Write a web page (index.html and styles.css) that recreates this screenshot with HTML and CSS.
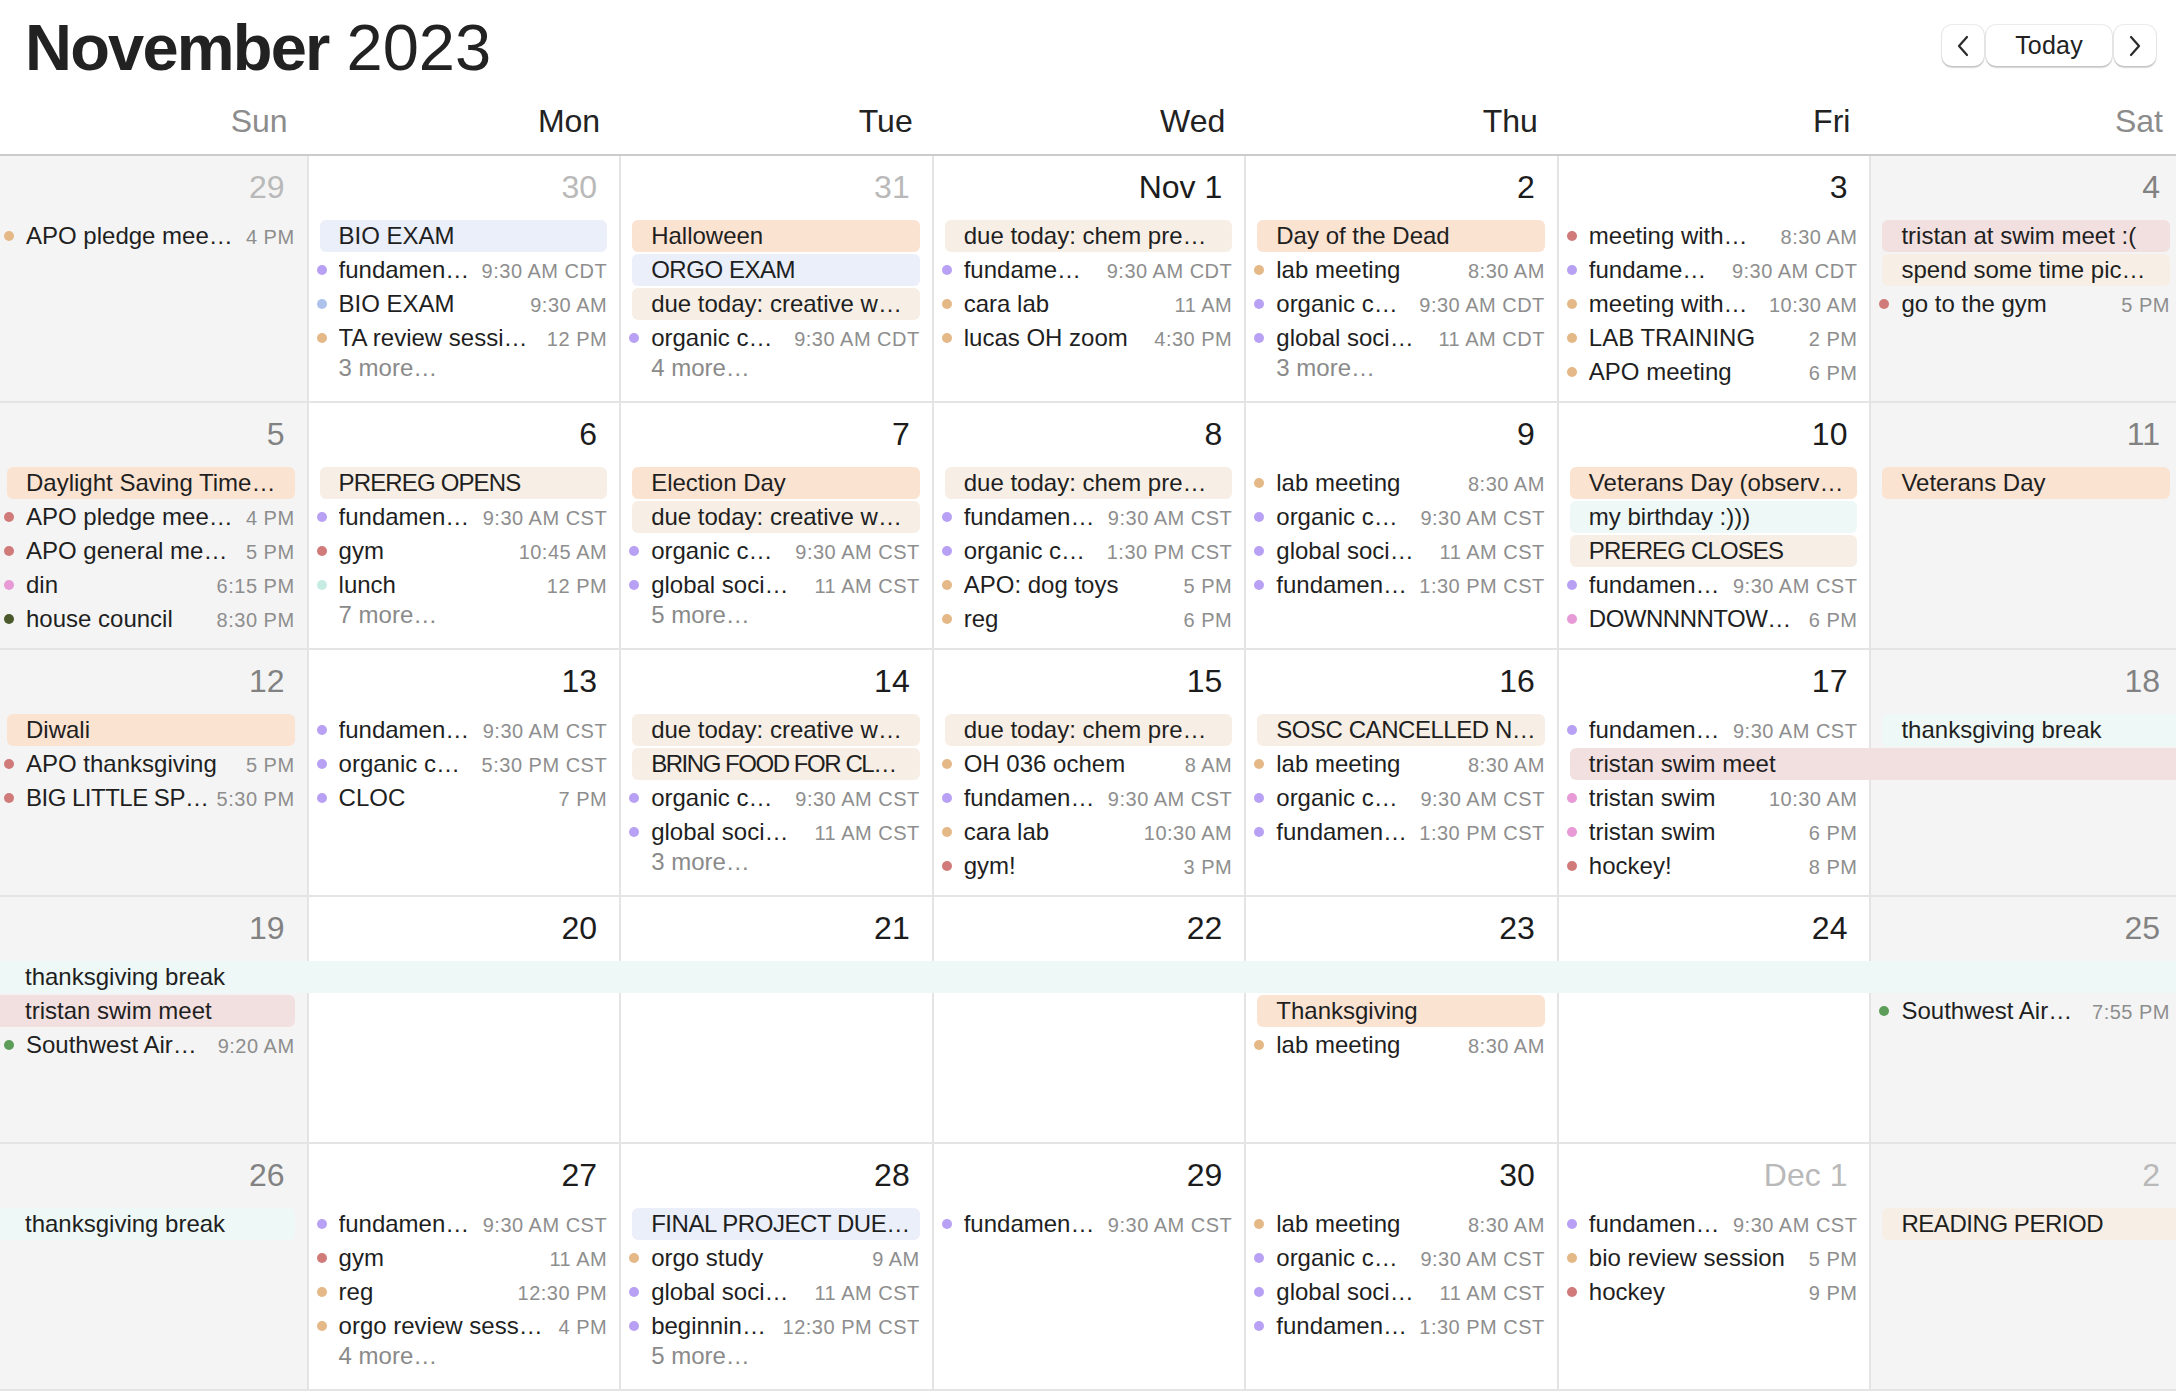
FILE: index.html
```html
<!DOCTYPE html>
<html>
<head>
<meta charset="utf-8">
<link rel="stylesheet" href="styles.css">
</head>
<body>
<div class="app">
  <header class="header">
    <div class="topbar">
      <h1 class="title"><b>November</b> 2023</h1>
      <div class="nav">
        <button class="btn icon"><svg width="16" height="24" viewBox="0 0 16 24"><path d="M12 3 L4 12 L12 21" fill="none" stroke="#2a2a2a" stroke-width="2.2" stroke-linecap="round" stroke-linejoin="round"/></svg></button>
        <button class="btn today">Today</button>
        <button class="btn icon"><svg width="16" height="24" viewBox="0 0 16 24"><path d="M4 3 L12 12 L4 21" fill="none" stroke="#2a2a2a" stroke-width="2.2" stroke-linecap="round" stroke-linejoin="round"/></svg></button>
      </div>
    </div>
    <div class="daynames">
      <div class="dn we">Sun</div><div class="dn">Mon</div><div class="dn">Tue</div><div class="dn">Wed</div><div class="dn">Thu</div><div class="dn">Fri</div><div class="dn we">Sat</div>
    </div>
  </header>

  <!-- Week 1 -->
  <section class="week">
    <div class="bg d1 we"></div><div class="bg d2"></div><div class="bg d3"></div><div class="bg d4"></div><div class="bg d5"></div><div class="bg d6"></div><div class="bg d7 we"></div>
    <div class="num d1 other">29</div><div class="num d2 other">30</div><div class="num d3 other">31</div><div class="num d4">Nov 1</div><div class="num d5">2</div><div class="num d6">3</div><div class="num d7 wen">4</div>

    <div class="ev timed d1 s1"><i class="dot tan"></i><span class="t">APO pledge mee…</span><span class="tm">4 PM</span></div>

    <div class="ev allday blue d2 s1">BIO EXAM</div>
    <div class="ev timed d2 s2"><i class="dot purple"></i><span class="t">fundamen…</span><span class="tm">9:30 AM CDT</span></div>
    <div class="ev timed d2 s3"><i class="dot lblue"></i><span class="t">BIO EXAM</span><span class="tm">9:30 AM</span></div>
    <div class="ev timed d2 s4"><i class="dot tan"></i><span class="t">TA review sessi…</span><span class="tm">12 PM</span></div>
    <div class="more d2 s5">3 more…</div>

    <div class="ev allday peach d3 s1">Halloween</div>
    <div class="ev allday blue d3 s2 caps">ORGO EXAM</div>
    <div class="ev allday beige d3 s3">due today: creative w…</div>
    <div class="ev timed d3 s4"><i class="dot purple"></i><span class="t">organic c…</span><span class="tm">9:30 AM CDT</span></div>
    <div class="more d3 s5">4 more…</div>

    <div class="ev allday beige d4 s1">due today: chem pre…</div>
    <div class="ev timed d4 s2"><i class="dot purple"></i><span class="t">fundame…</span><span class="tm">9:30 AM CDT</span></div>
    <div class="ev timed d4 s3"><i class="dot tan"></i><span class="t">cara lab</span><span class="tm">11 AM</span></div>
    <div class="ev timed d4 s4"><i class="dot tan"></i><span class="t">lucas OH zoom</span><span class="tm">4:30 PM</span></div>

    <div class="ev allday peach d5 s1">Day of the Dead</div>
    <div class="ev timed d5 s2"><i class="dot tan"></i><span class="t">lab meeting</span><span class="tm">8:30 AM</span></div>
    <div class="ev timed d5 s3"><i class="dot purple"></i><span class="t">organic c…</span><span class="tm">9:30 AM CDT</span></div>
    <div class="ev timed d5 s4"><i class="dot purple"></i><span class="t">global soci…</span><span class="tm">11 AM CDT</span></div>
    <div class="more d5 s5">3 more…</div>

    <div class="ev timed d6 s1"><i class="dot red"></i><span class="t">meeting with…</span><span class="tm">8:30 AM</span></div>
    <div class="ev timed d6 s2"><i class="dot purple"></i><span class="t">fundame…</span><span class="tm">9:30 AM CDT</span></div>
    <div class="ev timed d6 s3"><i class="dot tan"></i><span class="t">meeting with…</span><span class="tm">10:30 AM</span></div>
    <div class="ev timed d6 s4"><i class="dot tan"></i><span class="t">LAB TRAINING</span><span class="tm">2 PM</span></div>
    <div class="ev timed d6 s5"><i class="dot tan"></i><span class="t">APO meeting</span><span class="tm">6 PM</span></div>

    <div class="ev allday pink d7 s1">tristan at swim meet :(</div>
    <div class="ev allday beige d7 s2">spend some time pic…</div>
    <div class="ev timed d7 s3"><i class="dot red"></i><span class="t">go to the gym</span><span class="tm">5 PM</span></div>
  </section>

  <!-- Week 2 -->
  <section class="week">
    <div class="bg d1 we"></div><div class="bg d2"></div><div class="bg d3"></div><div class="bg d4"></div><div class="bg d5"></div><div class="bg d6"></div><div class="bg d7 we"></div>
    <div class="num d1 wen">5</div><div class="num d2">6</div><div class="num d3">7</div><div class="num d4">8</div><div class="num d5">9</div><div class="num d6">10</div><div class="num d7 wen">11</div>

    <div class="ev allday peach d1 s1">Daylight Saving Time…</div>
    <div class="ev timed d1 s2"><i class="dot red"></i><span class="t">APO pledge mee…</span><span class="tm">4 PM</span></div>
    <div class="ev timed d1 s3"><i class="dot red"></i><span class="t">APO general me…</span><span class="tm">5 PM</span></div>
    <div class="ev timed d1 s4"><i class="dot pinkd"></i><span class="t">din</span><span class="tm">6:15 PM</span></div>
    <div class="ev timed d1 s5"><i class="dot dgreen"></i><span class="t">house council</span><span class="tm">8:30 PM</span></div>

    <div class="ev allday beige d2 s1 caps-n">PREREG OPENS</div>
    <div class="ev timed d2 s2"><i class="dot purple"></i><span class="t">fundamen…</span><span class="tm">9:30 AM CST</span></div>
    <div class="ev timed d2 s3"><i class="dot red"></i><span class="t">gym</span><span class="tm">10:45 AM</span></div>
    <div class="ev timed d2 s4"><i class="dot mintd"></i><span class="t">lunch</span><span class="tm">12 PM</span></div>
    <div class="more d2 s5">7 more…</div>

    <div class="ev allday peach d3 s1">Election Day</div>
    <div class="ev allday beige d3 s2">due today: creative w…</div>
    <div class="ev timed d3 s3"><i class="dot purple"></i><span class="t">organic c…</span><span class="tm">9:30 AM CST</span></div>
    <div class="ev timed d3 s4"><i class="dot purple"></i><span class="t">global soci…</span><span class="tm">11 AM CST</span></div>
    <div class="more d3 s5">5 more…</div>

    <div class="ev allday beige d4 s1">due today: chem pre…</div>
    <div class="ev timed d4 s2"><i class="dot purple"></i><span class="t">fundamen…</span><span class="tm">9:30 AM CST</span></div>
    <div class="ev timed d4 s3"><i class="dot purple"></i><span class="t">organic c…</span><span class="tm">1:30 PM CST</span></div>
    <div class="ev timed d4 s4"><i class="dot tan"></i><span class="t">APO: dog toys</span><span class="tm">5 PM</span></div>
    <div class="ev timed d4 s5"><i class="dot tan"></i><span class="t">reg</span><span class="tm">6 PM</span></div>

    <div class="ev timed d5 s1"><i class="dot tan"></i><span class="t">lab meeting</span><span class="tm">8:30 AM</span></div>
    <div class="ev timed d5 s2"><i class="dot purple"></i><span class="t">organic c…</span><span class="tm">9:30 AM CST</span></div>
    <div class="ev timed d5 s3"><i class="dot purple"></i><span class="t">global soci…</span><span class="tm">11 AM CST</span></div>
    <div class="ev timed d5 s4"><i class="dot purple"></i><span class="t">fundamen…</span><span class="tm">1:30 PM CST</span></div>

    <div class="ev allday peach d6 s1">Veterans Day (observ…</div>
    <div class="ev allday mint d6 s2">my birthday :)))</div>
    <div class="ev allday beige d6 s3 caps-n">PREREG CLOSES</div>
    <div class="ev timed d6 s4"><i class="dot purple"></i><span class="t">fundamen…</span><span class="tm">9:30 AM CST</span></div>
    <div class="ev timed d6 s5"><i class="dot pinkd"></i><span class="t caps-t">DOWNNNNTOW…</span><span class="tm">6 PM</span></div>

    <div class="ev allday peach d7 s1">Veterans Day</div>
  </section>

  <!-- Week 3 -->
  <section class="week">
    <div class="bg d1 we"></div><div class="bg d2"></div><div class="bg d3"></div><div class="bg d4"></div><div class="bg d5"></div><div class="bg d6"></div><div class="bg d7 we"></div>
    <div class="num d1 wen">12</div><div class="num d2">13</div><div class="num d3">14</div><div class="num d4">15</div><div class="num d5">16</div><div class="num d6">17</div><div class="num d7 wen">18</div>

    <div class="ev allday peach d1 s1">Diwali</div>
    <div class="ev timed d1 s2"><i class="dot red"></i><span class="t">APO thanksgiving</span><span class="tm">5 PM</span></div>
    <div class="ev timed d1 s3"><i class="dot red"></i><span class="t caps-t">BIG LITTLE SP…</span><span class="tm">5:30 PM</span></div>

    <div class="ev timed d2 s1"><i class="dot purple"></i><span class="t">fundamen…</span><span class="tm">9:30 AM CST</span></div>
    <div class="ev timed d2 s2"><i class="dot purple"></i><span class="t">organic c…</span><span class="tm">5:30 PM CST</span></div>
    <div class="ev timed d2 s3"><i class="dot purple"></i><span class="t">CLOC</span><span class="tm">7 PM</span></div>

    <div class="ev allday beige d3 s1">due today: creative w…</div>
    <div class="ev allday beige d3 s2 caps-xn">BRING FOOD FOR CL…</div>
    <div class="ev timed d3 s3"><i class="dot purple"></i><span class="t">organic c…</span><span class="tm">9:30 AM CST</span></div>
    <div class="ev timed d3 s4"><i class="dot purple"></i><span class="t">global soci…</span><span class="tm">11 AM CST</span></div>
    <div class="more d3 s5">3 more…</div>

    <div class="ev allday beige d4 s1">due today: chem pre…</div>
    <div class="ev timed d4 s2"><i class="dot tan"></i><span class="t">OH 036 ochem</span><span class="tm">8 AM</span></div>
    <div class="ev timed d4 s3"><i class="dot purple"></i><span class="t">fundamen…</span><span class="tm">9:30 AM CST</span></div>
    <div class="ev timed d4 s4"><i class="dot tan"></i><span class="t">cara lab</span><span class="tm">10:30 AM</span></div>
    <div class="ev timed d4 s5"><i class="dot red"></i><span class="t">gym!</span><span class="tm">3 PM</span></div>

    <div class="ev allday beige d5 s1 caps">SOSC CANCELLED N…</div>
    <div class="ev timed d5 s2"><i class="dot tan"></i><span class="t">lab meeting</span><span class="tm">8:30 AM</span></div>
    <div class="ev timed d5 s3"><i class="dot purple"></i><span class="t">organic c…</span><span class="tm">9:30 AM CST</span></div>
    <div class="ev timed d5 s4"><i class="dot purple"></i><span class="t">fundamen…</span><span class="tm">1:30 PM CST</span></div>

    <div class="ev timed d6 s1"><i class="dot purple"></i><span class="t">fundamen…</span><span class="tm">9:30 AM CST</span></div>
    <div class="ev allday pink d6 s2 to-end cont-r">tristan swim meet</div>
    <div class="ev timed d6 s3"><i class="dot pinkd"></i><span class="t">tristan swim</span><span class="tm">10:30 AM</span></div>
    <div class="ev timed d6 s4"><i class="dot pinkd"></i><span class="t">tristan swim</span><span class="tm">6 PM</span></div>
    <div class="ev timed d6 s5"><i class="dot red"></i><span class="t">hockey!</span><span class="tm">8 PM</span></div>

    <div class="ev allday mint d7 s1 cont-r">thanksgiving break</div>
  </section>

  <!-- Week 4 -->
  <section class="week">
    <div class="bg d1 we"></div><div class="bg d2"></div><div class="bg d3"></div><div class="bg d4"></div><div class="bg d5"></div><div class="bg d6"></div><div class="bg d7 we"></div>
    <div class="num d1 wen">19</div><div class="num d2">20</div><div class="num d3">21</div><div class="num d4">22</div><div class="num d5">23</div><div class="num d6">24</div><div class="num d7 wen">25</div>

    <div class="ev allday mint d1 s1 to-end cont-l cont-r">thanksgiving break</div>
    <div class="ev allday pink d1 s2 cont-l">tristan swim meet</div>
    <div class="ev timed d1 s3"><i class="dot green"></i><span class="t">Southwest Air…</span><span class="tm">9:20 AM</span></div>

    <div class="ev allday peach d5 s2">Thanksgiving</div>
    <div class="ev timed d5 s3"><i class="dot tan"></i><span class="t">lab meeting</span><span class="tm">8:30 AM</span></div>

    <div class="ev timed d7 s2"><i class="dot green"></i><span class="t">Southwest Air…</span><span class="tm">7:55 PM</span></div>
  </section>

  <!-- Week 5 -->
  <section class="week">
    <div class="bg d1 we"></div><div class="bg d2"></div><div class="bg d3"></div><div class="bg d4"></div><div class="bg d5"></div><div class="bg d6"></div><div class="bg d7 we"></div>
    <div class="num d1 wen">26</div><div class="num d2">27</div><div class="num d3">28</div><div class="num d4">29</div><div class="num d5">30</div><div class="num d6 other">Dec 1</div><div class="num d7 other">2</div>

    <div class="ev allday mint d1 s1 cont-l">thanksgiving break</div>

    <div class="ev timed d2 s1"><i class="dot purple"></i><span class="t">fundamen…</span><span class="tm">9:30 AM CST</span></div>
    <div class="ev timed d2 s2"><i class="dot red"></i><span class="t">gym</span><span class="tm">11 AM</span></div>
    <div class="ev timed d2 s3"><i class="dot tan"></i><span class="t">reg</span><span class="tm">12:30 PM</span></div>
    <div class="ev timed d2 s4"><i class="dot tan"></i><span class="t">orgo review sess…</span><span class="tm">4 PM</span></div>
    <div class="more d2 s5">4 more…</div>

    <div class="ev allday blue d3 s1 caps">FINAL PROJECT DUE…</div>
    <div class="ev timed d3 s2"><i class="dot tan"></i><span class="t">orgo study</span><span class="tm">9 AM</span></div>
    <div class="ev timed d3 s3"><i class="dot purple"></i><span class="t">global soci…</span><span class="tm">11 AM CST</span></div>
    <div class="ev timed d3 s4"><i class="dot purple"></i><span class="t">beginnin…</span><span class="tm">12:30 PM CST</span></div>
    <div class="more d3 s5">5 more…</div>

    <div class="ev timed d4 s1"><i class="dot purple"></i><span class="t">fundamen…</span><span class="tm">9:30 AM CST</span></div>

    <div class="ev timed d5 s1"><i class="dot tan"></i><span class="t">lab meeting</span><span class="tm">8:30 AM</span></div>
    <div class="ev timed d5 s2"><i class="dot purple"></i><span class="t">organic c…</span><span class="tm">9:30 AM CST</span></div>
    <div class="ev timed d5 s3"><i class="dot purple"></i><span class="t">global soci…</span><span class="tm">11 AM CST</span></div>
    <div class="ev timed d5 s4"><i class="dot purple"></i><span class="t">fundamen…</span><span class="tm">1:30 PM CST</span></div>

    <div class="ev timed d6 s1"><i class="dot purple"></i><span class="t">fundamen…</span><span class="tm">9:30 AM CST</span></div>
    <div class="ev timed d6 s2"><i class="dot tan"></i><span class="t">bio review session</span><span class="tm">5 PM</span></div>
    <div class="ev timed d6 s3"><i class="dot red"></i><span class="t">hockey</span><span class="tm">9 PM</span></div>

    <div class="ev allday beige d7 s1 cont-r caps">READING PERIOD</div>
  </section>
</div>
</body>
</html>
```

FILE: styles.css
```css
* { box-sizing: border-box; margin: 0; padding: 0; }

html, body { background: #ffffff; }

body {
  font-family: "Liberation Sans", Arial, Helvetica, sans-serif;
  color: #222222;
  width: 2176px;
  height: 1392px;
  overflow: hidden;
}

.app {
  width: 2176px;
  height: 1392px;
  overflow: hidden;
}

/* ---------- header ---------- */
.header {
  height: 156px;
  border-bottom: 2px solid #cbcbcb;
  display: flex;
  flex-direction: column;
}

.topbar {
  height: 94px;
  display: flex;
  justify-content: space-between;
  align-items: flex-start;
  padding: 0 20px 0 25px;
}

.title {
  font-size: 65px;
  line-height: 90px;
  margin-top: 3px;
  font-weight: 400;
  color: #222222;
  white-space: nowrap;
}

.title b {
  font-weight: 700;
  letter-spacing: -1.8px;
}

.nav {
  margin-top: 25px;
  display: flex;
  gap: 2px;
}

.btn {
  height: 41px;
  background: #ffffff;
  border: none;
  border-radius: 10px;
  box-shadow: 0 0 0 1px rgba(0, 0, 0, 0.07), 0 1.5px 1.5px rgba(0, 0, 0, 0.18);
  display: flex;
  align-items: center;
  justify-content: center;
  font-family: "Liberation Sans", Arial, sans-serif;
  color: #222222;
}

.btn.icon { width: 42px; }

.btn.today {
  width: 126px;
  font-size: 25px;
  letter-spacing: 0.2px;
}

.daynames {
  display: grid;
  grid-template-columns: repeat(7, 1fr);
  width: 2188px;
  margin-left: -6px;
  height: 60px;
}

.dn {
  text-align: right;
  padding-right: 19px;
  font-size: 32px;
  line-height: 54px;
  color: #222222;
}

.dn.we { color: #8c8c8c; }

/* ---------- week grid ---------- */
.week {
  display: grid;
  grid-template-columns: repeat(7, 1fr);
  grid-template-rows: 64px repeat(5, 34px) 1fr;
  width: 2188px;
  margin-left: -6px;
  height: 247px;
  border-bottom: 2px solid #e4e4e4;
}

.d1 { grid-column-start: 1; }
.d2 { grid-column-start: 2; }
.d3 { grid-column-start: 3; }
.d4 { grid-column-start: 4; }
.d5 { grid-column-start: 5; }
.d6 { grid-column-start: 6; }
.d7 { grid-column-start: 7; }

.s1 { grid-row: 2; }
.s2 { grid-row: 3; }
.s3 { grid-row: 4; }
.s4 { grid-row: 5; }
.s5 { grid-row: 6; }

.to-end { grid-column-end: -1; }

.bg {
  grid-row: 1 / -1;
  border-left: 2px solid #e4e4e4;
  background: #ffffff;
}

.bg.d1 { border-left: none; }
.bg.we { background: #f4f4f4; }

.num {
  grid-row: 1;
  justify-self: end;
  align-self: start;
  padding-right: 22px;
  font-size: 32px;
  line-height: 62px;
  color: #1c1c1c;
  white-space: nowrap;
}

.num.wen { color: #828282; }
.num.other { color: #b9b9b9; }

/* ---------- events ---------- */
.ev {
  height: 32px;
  margin: 0 12px 0 13px;
  font-size: 24px;
  white-space: nowrap;
  overflow: hidden;
  min-width: 0;
}

.allday {
  border-radius: 6px;
  padding-left: 19px;
  line-height: 32px;
  color: #1f1f1f;
}

.allday.cont-l {
  margin-left: 0;
  border-top-left-radius: 0;
  border-bottom-left-radius: 0;
  padding-left: 31px;
}

.allday.cont-r {
  margin-right: 0;
  border-top-right-radius: 0;
  border-bottom-right-radius: 0;
}

.caps { letter-spacing: -0.45px; }
.caps-n { letter-spacing: -0.85px; }
.caps-xn { letter-spacing: -1.45px; }
.caps-t { letter-spacing: -0.5px; }

.peach { background: #fbe3d2; }
.blue  { background: #ebeff9; }
.beige { background: #f7efe5; }
.pink  { background: #f2e0e0; }
.mint  { background: #eef8f6; }

.timed {
  display: flex;
  align-items: baseline;
  margin-left: 10px;
}

.dot {
  flex: 0 0 10px;
  width: 10px;
  height: 10px;
  border-radius: 50%;
  margin-right: 12px;
  align-self: center;
}

.t {
  flex: 1 1 auto;
  min-width: 0;
  line-height: 32px;
  overflow: hidden;
  white-space: nowrap;
  color: #1f1f1f;
}

.tm {
  flex: 0 0 auto;
  margin-left: 6px;
  font-size: 20px;
  letter-spacing: 0.5px;
  color: #8e8e8e;
}

.dot.purple { background: #b8a1f4; }
.dot.tan    { background: #e5b888; }
.dot.lblue  { background: #adc2ea; }
.dot.red    { background: #d07a7a; }
.dot.pinkd  { background: #e79ad6; }
.dot.mintd  { background: #c6ebe2; }
.dot.dgreen { background: #4b5a2c; }
.dot.green  { background: #5c9d5a; }

.more {
  margin-left: 32px;
  margin-top: -4px;
  font-size: 24px;
  line-height: 32px;
  color: #8a8a8a;
  white-space: nowrap;
}
```
